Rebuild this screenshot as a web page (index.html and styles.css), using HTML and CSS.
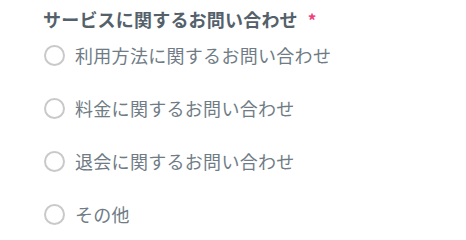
FILE: index.html
```html
<!DOCTYPE html>
<html lang="ja">
<head>
<meta charset="utf-8">
<link rel="stylesheet" href="styles.css">
</head>
<body>
<div class="field">
  <div class="label">サービスに関するお問い合わせ<span class="req">*</span></div>
  <ul class="options">
    <li class="option"><span class="radio"></span><span class="text">利用方法に関するお問い合わせ</span></li>
    <li class="option"><span class="radio"></span><span class="text">料金に関するお問い合わせ</span></li>
    <li class="option"><span class="radio"></span><span class="text">退会に関するお問い合わせ</span></li>
    <li class="option"><span class="radio"></span><span class="text">その他</span></li>
  </ul>
</div>
</body>
</html>
```
FILE: styles.css
```css
html, body {
  margin: 0;
  padding: 0;
  background: #ffffff;
}
body {
  font-family: "Noto Sans CJK JP", "Noto Sans", sans-serif;
  width: 466px;
  height: 235px;
  overflow: hidden;
}
.field {
  padding: 7px 0 0 43px;
}
.label {
  font-size: 18px;
  font-weight: bold;
  color: #55616a;
  line-height: 24px;
  letter-spacing: 0.2px;
}
.req {
  color: #f0407a;
  font-size: 17px;
  margin-left: 10px;
}
.options {
  list-style: none;
  margin: 0;
  padding: 10px 0 0 1px;
  display: flex;
  flex-direction: column;
  gap: 27px;
}
.option {
  display: flex;
  align-items: center;
  gap: 10px;
  height: 26px;
}
.radio {
  box-sizing: border-box;
  width: 21px;
  height: 21px;
  border: 2.5px solid #c9c9c9;
  border-radius: 50%;
  flex: none;
}
.text {
  font-size: 18px;
  color: #6f7c85;
  letter-spacing: 0.3px;
}
```
